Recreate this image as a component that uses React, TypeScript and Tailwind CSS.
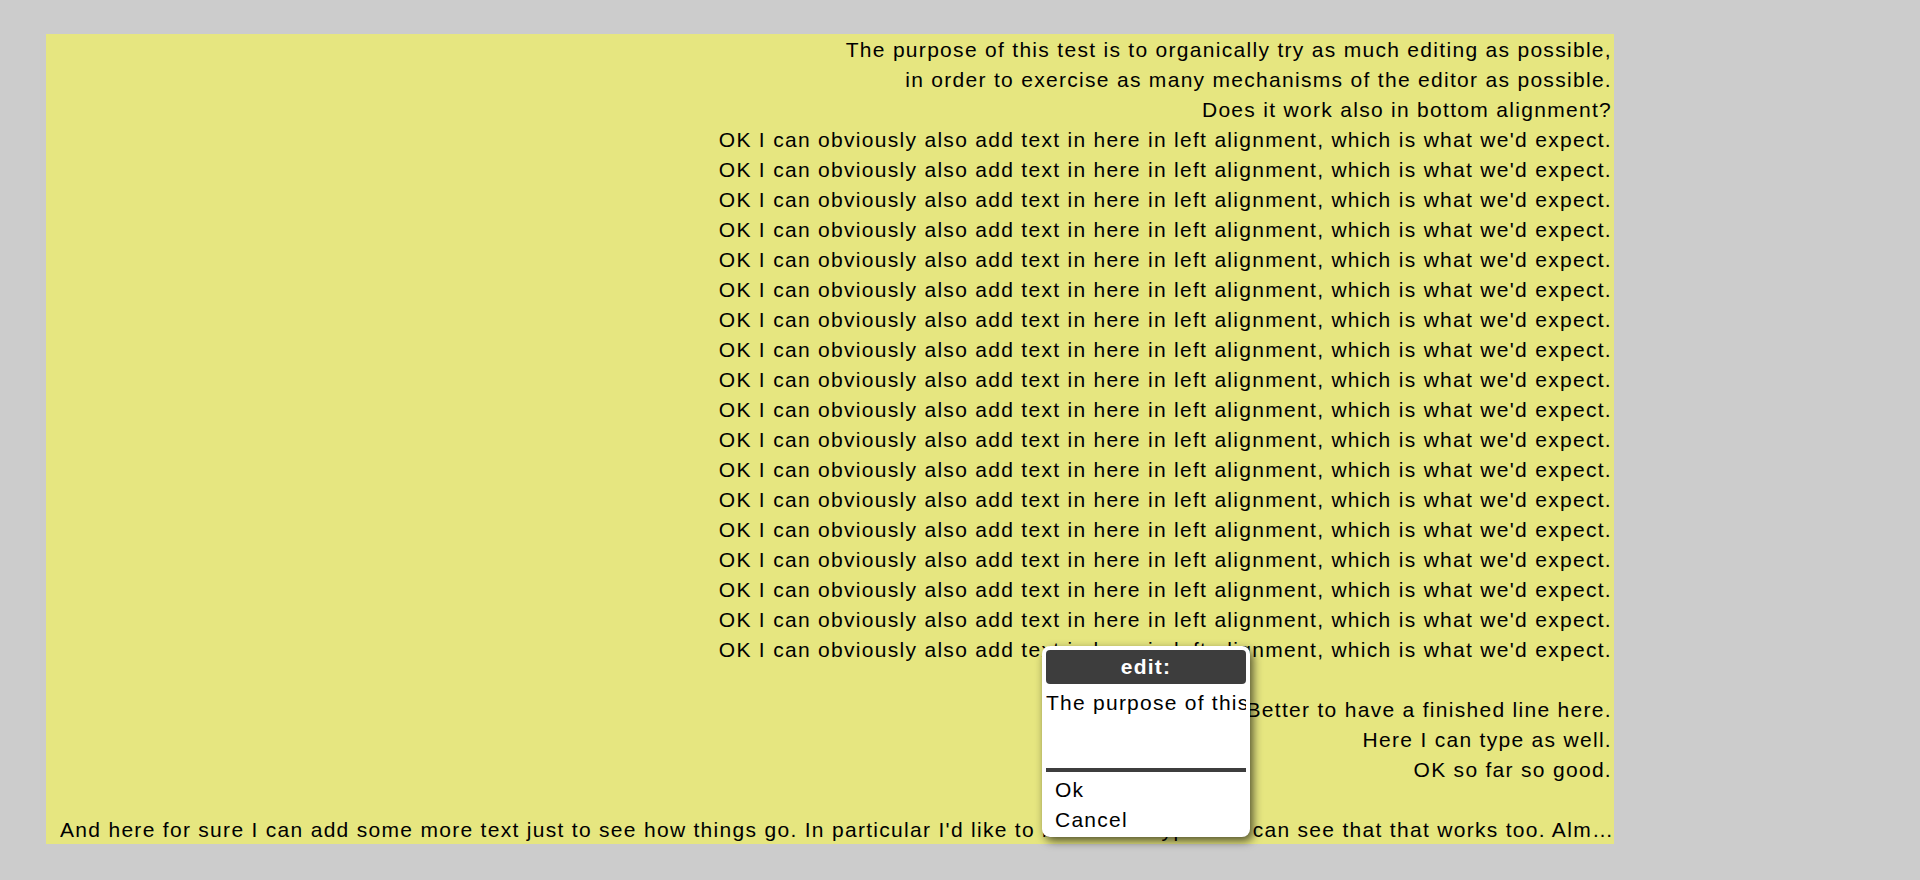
import React from "react";

const okLine = "OK I can obviously also add text in here in left alignment, which is what we'd expect.";

const topLines = [
  "The purpose of this test is to organically try as much editing as possible,",
  "in order to exercise as many mechanisms of the editor as possible.",
  "Does it work also in bottom alignment?",
  ...Array.from({ length: 18 }, () => okLine),
];

const midLines = [
  "Better to have a finished line here.",
  "Here I can type as well.",
  "OK so far so good.",
];

export default function App() {
  return (
    <div className="min-h-screen bg-[#cccccc] pt-[34px] pl-[46px] font-['Liberation_Sans',Arial,sans-serif]">
      <div className="relative w-[1568px] h-[810px] bg-[#e6e680] text-right text-[21px] tracking-[1.3px] leading-[30px] text-black pt-[1px] pl-[14px] pr-[2px]">
        {/* document lines */}
        {topLines.map((line, idx) => (
          <div key={idx}>{line}</div>
        ))}
        <div>&nbsp;</div>
        {midLines.map((line, idx) => (
          <div key={idx}>{line}</div>
        ))}
        <div>&nbsp;</div>
        <div className="text-left whitespace-nowrap overflow-hidden">
          And here for sure I can add some more text just to see how things go. In particular I'd like to be able to type so I can see that that works too. Alm…
        </div>

        {/* EDIT POPUP */}
        <div className="absolute left-[996px] top-[612px] w-[208px] h-[191px] bg-white rounded-[8px] p-[4px] text-left tracking-[1.25px] shadow-[3px_4px_10px_rgba(0,0,0,0.65)]">
          <div className="h-[34px] rounded-[4px] bg-[#3d3d3d] text-white font-bold text-center leading-[34px]">
            edit:
          </div>
          <div className="mt-[4px] h-[80px] overflow-hidden whitespace-nowrap">
            The purpose of this test is to organically try as much editing as possible,
          </div>
          <div className="h-[4px] bg-[#3d3d3d]" />
          <div className="pt-[3px] pl-[9px]">
            <div>Ok</div>
            <div>Cancel</div>
          </div>
        </div>
      </div>
    </div>
  );
}
